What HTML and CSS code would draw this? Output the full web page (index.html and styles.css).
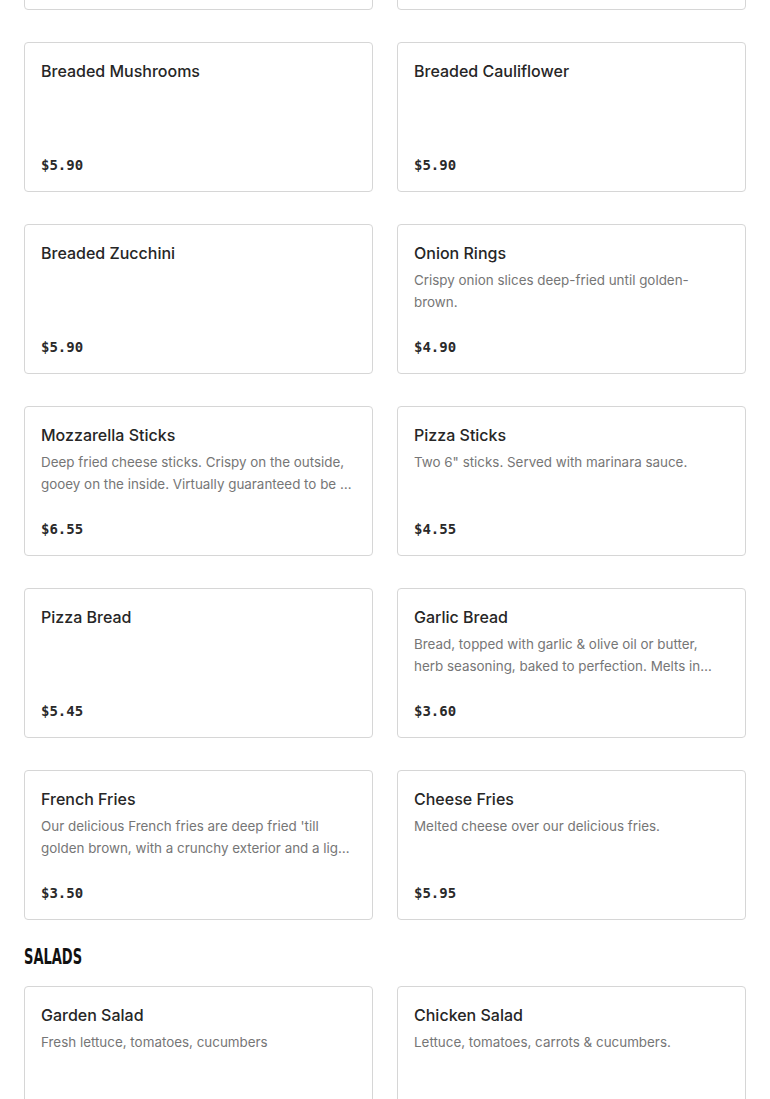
FILE: index.html
```html
<!DOCTYPE html>
<html lang="en">
<head>
<meta charset="utf-8">
<title>Menu</title>
<link rel="stylesheet" href="styles.css">
</head>
<body>
<main class="menu">
  <section class="section">
    <div class="grid">
      <div class="card"><h3 class="title">Chicken Wings</h3><p class="desc"></p><div class="price">$9.90</div></div>
      <div class="card"><h3 class="title">Boneless Wings</h3><p class="desc"></p><div class="price">$9.90</div></div>
      <div class="card"><h3 class="title">Breaded Mushrooms</h3><p class="desc"></p><div class="price">$5.90</div></div>
      <div class="card"><h3 class="title">Breaded Cauliflower</h3><p class="desc"></p><div class="price">$5.90</div></div>
      <div class="card"><h3 class="title">Breaded Zucchini</h3><p class="desc"></p><div class="price">$5.90</div></div>
      <div class="card"><h3 class="title">Onion Rings</h3><p class="desc">Crispy onion slices deep-fried until golden-brown.</p><div class="price">$4.90</div></div>
      <div class="card"><h3 class="title">Mozzarella Sticks</h3><p class="desc">Deep fried cheese sticks. Crispy on the outside, gooey on the inside. Virtually guaranteed to be a hit with everyone.</p><div class="price">$6.55</div></div>
      <div class="card"><h3 class="title">Pizza Sticks</h3><p class="desc">Two 6" sticks. Served with marinara sauce.</p><div class="price">$4.55</div></div>
      <div class="card"><h3 class="title">Pizza Bread</h3><p class="desc"></p><div class="price">$5.45</div></div>
      <div class="card"><h3 class="title">Garlic Bread</h3><p class="desc">Bread, topped with garlic &amp; olive oil or butter, herb seasoning, baked to perfection. Melts in your mouth.</p><div class="price">$3.60</div></div>
      <div class="card"><h3 class="title">French Fries</h3><p class="desc">Our delicious French fries are deep fried 'till golden brown, with a crunchy exterior and a light fluffy interior.</p><div class="price">$3.50</div></div>
      <div class="card"><h3 class="title">Cheese Fries</h3><p class="desc">Melted cheese over our delicious fries.</p><div class="price">$5.95</div></div>
    </div>
  </section>
  <section class="section">
    <h2 class="heading"><span>SALADS</span></h2>
    <div class="grid">
      <div class="card"><h3 class="title">Garden Salad</h3><p class="desc">Fresh lettuce, tomatoes, cucumbers</p><div class="price">$5.50</div></div>
      <div class="card"><h3 class="title">Chicken Salad</h3><p class="desc">Lettuce, tomatoes, carrots &amp; cucumbers.</p><div class="price">$9.50</div></div>
    </div>
  </section>
</main>
</body>
</html>
```
FILE: styles.css
```css
* { box-sizing: border-box; }
html, body { margin: 0; padding: 0; background: #fff; }
body {
  font-family: Inter, "Liberation Sans", Arial, sans-serif;
  color: #2a2a2a;
  overflow: hidden;
}
.menu {
  padding: 0 24px;
  margin-top: -140px;
}
.grid {
  display: grid;
  grid-template-columns: 1fr 1fr;
  column-gap: 24px;
  row-gap: 32px;
}
.card {
  height: 150px;
  border: 1px solid #d6d6d6;
  border-radius: 4px;
  padding: 16px;
  display: flex;
  flex-direction: column;
  background: #fff;
}
.title {
  margin: 0;
  font-size: 16px;
  line-height: 24px;
  font-weight: 500;
  color: #262626;
}
.desc {
  margin: 4px 0 0;
  font-size: 13.4px;
  line-height: 22px;
  color: #767676;
  display: -webkit-box;
  -webkit-line-clamp: 2;
  -webkit-box-orient: vertical;
  overflow: hidden;
}
.price {
  margin-top: auto;
  font-family: "DejaVu Sans Mono", "Liberation Mono", monospace;
  font-weight: 700;
  font-size: 14px;
  line-height: 20px;
  color: #2a2a2a;
}
.heading {
  margin: 22px 0 14px;
  font-family: "DejaVu Sans", "Liberation Sans", sans-serif;
  font-stretch: condensed;
  font-weight: 700;
  font-size: 21px;
  line-height: 30px;
  color: #111;
}
.heading span {
  display: inline-block;
  transform: scaleX(0.69);
  transform-origin: left center;
}
```
